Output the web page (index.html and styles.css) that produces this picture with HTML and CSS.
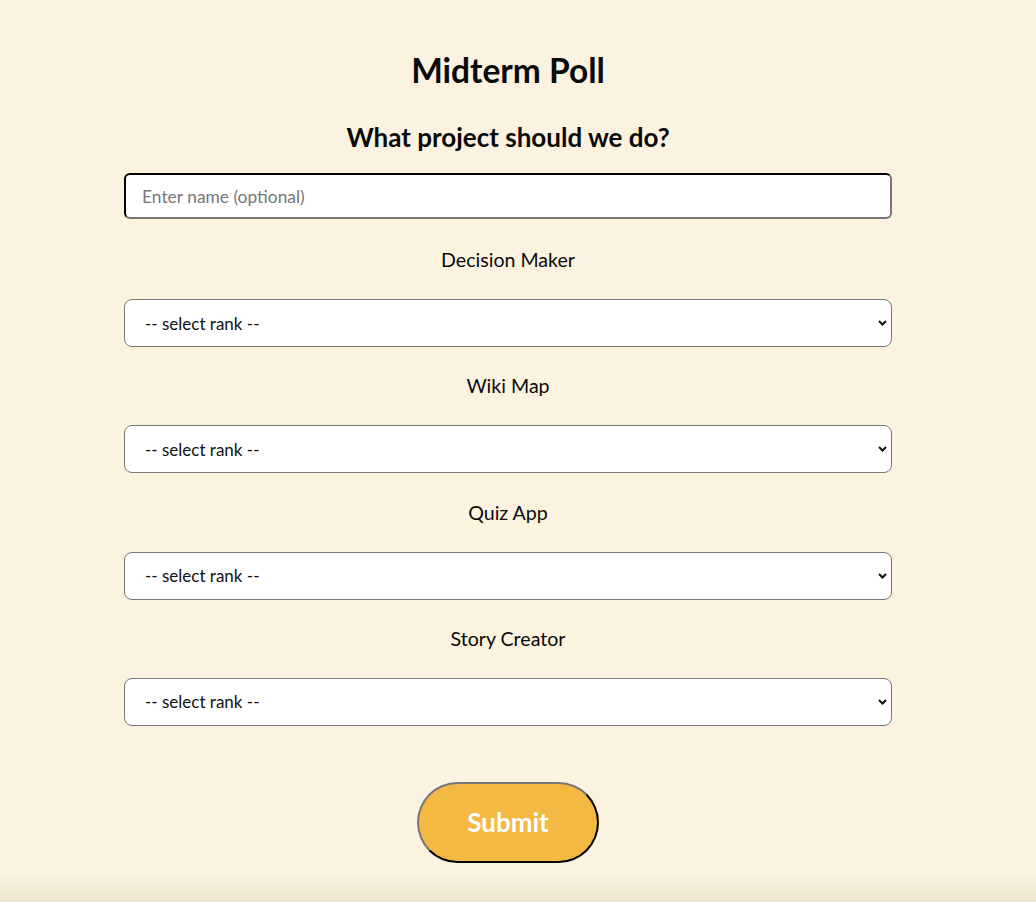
FILE: index.html
```html
<!DOCTYPE html>
<html lang="en">
<head>
<meta charset="utf-8">
<title>Midterm Poll</title>
<link rel="stylesheet" href="styles.css">
</head>
<body>
<main class="page">
  <h1 class="title">Midterm Poll</h1>
  <form class="poll">
    <h2 class="question">What project should we do?</h2>
    <input class="name-input" type="text" placeholder="Enter name (optional)">
    <div class="option">
      <label class="option-label">Decision Maker</label>
      <select class="rank"><option>-- select rank --</option></select>
    </div>
    <div class="option">
      <label class="option-label">Wiki Map</label>
      <select class="rank"><option>-- select rank --</option></select>
    </div>
    <div class="option">
      <label class="option-label">Quiz App</label>
      <select class="rank"><option>-- select rank --</option></select>
    </div>
    <div class="option">
      <label class="option-label">Story Creator</label>
      <select class="rank"><option>-- select rank --</option></select>
    </div>
    <button class="submit" type="button">Submit</button>
  </form>
</main>
<div class="bottom-shade"></div>
</body>
</html>
```

FILE: styles.css
```css
html, body {
  margin: 0;
  padding: 0;
}
body {
  background: #fbf3e0;
  font-family: "Lato", "Noto Sans", sans-serif;
  color: #0a0a0a;
  height: 902px;
  overflow: hidden;
  position: relative;
}
.page {
  width: 768px;
  margin: 0 0 0 124px;
  padding-top: 51px;
  display: flex;
  flex-direction: column;
  align-items: center;
}
.title {
  margin: 0;
  font-size: 33.5px;
  font-weight: 700;
  line-height: 38px;
}
.poll {
  width: 100%;
  display: flex;
  flex-direction: column;
  align-items: center;
}
.question {
  margin: 33px 0 0;
  font-size: 26px;
  font-weight: 700;
  line-height: 30px;
}
.name-input {
  box-sizing: border-box;
  width: 100%;
  height: 46px;
  margin-top: 21px;
  border: 2px inset #777;
  border-top-color: #222;
  border-left-color: #222;
  border-right-color: #777;
  border-bottom-color: #777;
  border-radius: 6px;
  background: #fff;
  padding: 0 16px;
  font-family: inherit;
  font-size: 17.4px;
}
.name-input::placeholder {
  color: #777;
}
.option {
  width: 100%;
  display: flex;
  flex-direction: column;
  align-items: center;
}
.option-label {
  font-size: 19.6px;
  line-height: 24px;
  margin-top: 29px;
  margin-bottom: 27px;
}
.option + .option .option-label {
  margin-top: 27.33px;
}
.rank {
  box-sizing: border-box;
  width: 100%;
  height: 48px;
  border: 1px solid #777;
  border-radius: 8px;
  background-color: #fff;
  background-image: url("data:image/svg+xml;utf8,<svg xmlns='http://www.w3.org/2000/svg' width='9' height='6' viewBox='0 0 9 6'><path d='M1 1 L4.5 4.5 L8 1' fill='none' stroke='%23111' stroke-width='2'/></svg>");
  background-repeat: no-repeat;
  background-position: right 4px center;
  -webkit-appearance: none;
  appearance: none;
  padding: 0 20px;
  font-family: inherit;
  font-size: 17px;
  color: #111;
}
.submit {
  margin-top: 56px;
  width: 182px;
  height: 81px;
  border-radius: 41px;
  border: 2px outset #777;
  border-top-color: #777;
  border-left-color: #777;
  border-right-color: #222;
  border-bottom-color: #222;
  background: #f3b942;
  color: #fff;
  font-family: inherit;
  font-size: 26px;
  font-weight: 700;
}
.bottom-shade {
  position: absolute;
  left: 0;
  right: 0;
  bottom: 0;
  height: 30px;
  background: linear-gradient(to bottom, rgba(0,0,0,0), rgba(80,60,20,0.08));
}
```
